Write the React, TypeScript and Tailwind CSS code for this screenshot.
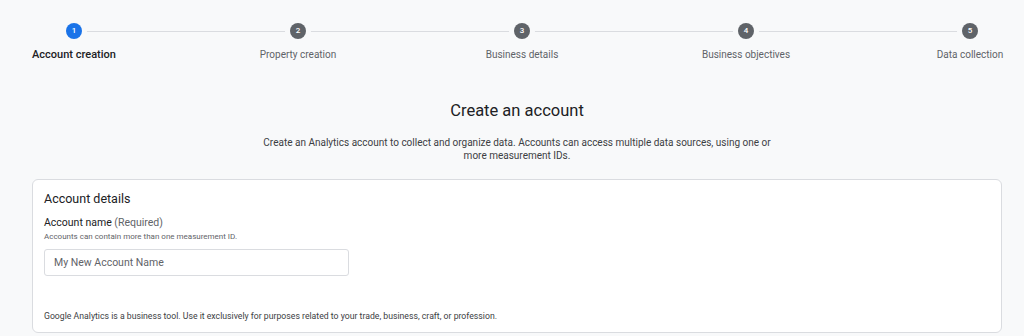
const STEPS = [
  { n: 1, label: "Account creation", active: true },
  { n: 2, label: "Property creation" },
  { n: 3, label: "Business details" },
  { n: 4, label: "Business objectives" },
  { n: 5, label: "Data collection" },
];

function Stepper() {
  return (
    <div className="relative flex justify-between pl-[32px] pr-[12px] pt-[23px]">
      <div className="absolute left-[74px] right-[54px] top-[31px] h-px bg-[#dadce0]" />
      {STEPS.map((s) => (
        <div key={s.n} className="relative flex w-[84px] flex-col items-center">
          <div
            className={
              s.active
                ? "flex h-[16px] w-[16px] items-center justify-center rounded-full bg-[#1a73e8] text-[8px] font-medium text-white ring-[5px] ring-[#f8f9fa]"
                : "flex h-[16px] w-[16px] items-center justify-center rounded-full bg-[#5f6368] text-[8px] font-medium text-white ring-[5px] ring-[#f8f9fa]"
            }
          >
            {s.n}
          </div>
          <div
            className={
              s.active
                ? "mt-[9px] whitespace-nowrap text-[11px] font-medium leading-[14px] text-[#202124]"
                : "mt-[9px] whitespace-nowrap text-[10px] leading-[14px] text-[#5f6368]"
            }
          >
            {s.label}
          </div>
        </div>
      ))}
    </div>
  );
}

export default function App() {
  return (
    <div className="min-h-[336px] w-[1024px] overflow-hidden bg-[#f8f9fa] font-['Roboto',sans-serif]">
      <Stepper />

      <div className="mt-[38px] flex flex-col items-center pl-[10px]">
        <h1 className="text-[16.5px] font-normal leading-[22px] text-[#202124]">Create an account</h1>
        <p className="mt-[14px] w-[522px] text-center text-[10px] leading-[13px] text-[#3c4043]">
          Create an Analytics account to collect and organize data. Accounts can access multiple data sources, using one or more measurement IDs.
        </p>
      </div>

      <div className="mx-[32px] mt-[17px] w-[970px] rounded-[6px] border border-[#dadce0] bg-white px-[11px] pt-[10px] pb-[10px]">
        <h2 className="text-[12.5px] leading-[18px] text-[#202124]">Account details</h2>
        <div className="mt-[8px] text-[10.5px] leading-[14px] text-[#202124]">
          Account name <span className="text-[#5f6368]">(Required)</span>
        </div>
        <div className="mt-[1px] text-[8px] leading-[12px] text-[#5f6368]">
          Accounts can contain more than one measurement ID.
        </div>
        <div className="mt-[6px] flex h-[27px] w-[305px] items-center rounded-[3px] border border-[#dadce0] px-[9px] text-[10.5px] text-[#5f6368]">
          My New Account Name
        </div>
        <p className="mt-[34px] text-[8.7px] leading-[12px] text-[#3c4043]">
          Google Analytics is a business tool. Use it exclusively for purposes related to your trade, business, craft, or profession.
        </p>
      </div>
    </div>
  );
}
